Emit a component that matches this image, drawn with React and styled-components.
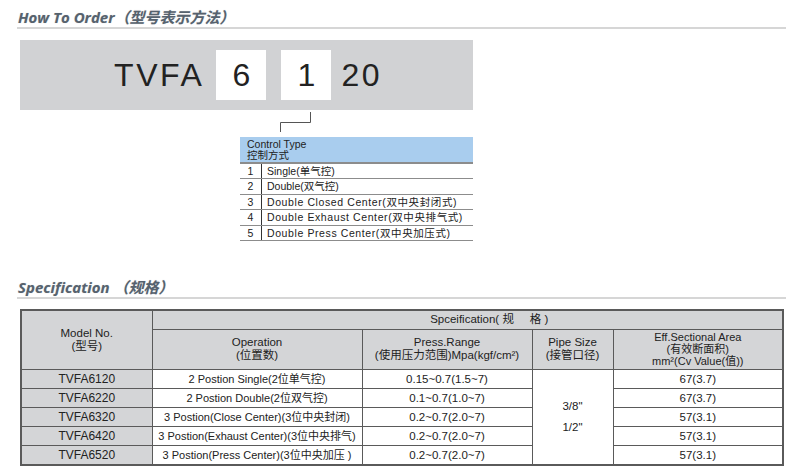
import React from "react";
import styled, { createGlobalStyle } from "styled-components";

const Global = createGlobalStyle`
  body {
    margin: 0;
    background: #ffffff;
    font-family: "Liberation Sans", Arial, "Noto Sans CJK SC", sans-serif;
    color: #222;
  }
`;

const controlTypes = [
  { no: 1, text: "Single(单气控)" },
  { no: 2, text: "Double(双气控)" },
  { no: 3, text: "Double Closed Center(双中央封闭式)", wide: true },
  { no: 4, text: "Double Exhaust Center(双中央排气式)", wide: true },
  { no: 5, text: "Double Press Center(双中央加压式)", wide: true },
];

const models = [
  { model: "TVFA6120", op: "2 Postion Single(2位单气控)", press: "0.15~0.7(1.5~7)", area: "67(3.7)" },
  { model: "TVFA6220", op: "2 Postion Double(2位双气控)", press: "0.1~0.7(1.0~7)", area: "67(3.7)" },
  { model: "TVFA6320", op: "3 Postion(Close Center)(3位中央封闭)", press: "0.2~0.7(2.0~7)", area: "57(3.1)" },
  { model: "TVFA6420", op: "3 Postion(Exhaust Center)(3位中央排气)", press: "0.2~0.7(2.0~7)", area: "57(3.1)" },
  { model: "TVFA6520", op: "3 Postion(Press Center)(3位中央加压 )", press: "0.2~0.7(2.0~7)", area: "57(3.1)" },
];

export default function App() {
  return (
    <Page>
      <Global />
      <Heading>How To Order（型号表示方法）</Heading>
      <Rule />
      <CodeBar>
        <CodeText>TVFA</CodeText>
        <CodeBox>6</CodeBox>
        <CodeBox>1</CodeBox>
        <CodeText $gap={10}>20</CodeText>
      </CodeBar>
      <Connector width="453" height="27" viewBox="0 0 453 27">
        <path d="M290.5 2 V12.5 H260.5 V22" fill="none" stroke="#555" strokeWidth="1" />
      </Connector>
      <ControlTable>
        <ControlHead>
          <div>Control Type</div>
          <div>控制方式</div>
        </ControlHead>
        {controlTypes.map((c) => (
          <ControlRow key={c.no}>
            <ControlNo>{c.no}</ControlNo>
            <ControlText $wide={c.wide}>{c.text}</ControlText>
          </ControlRow>
        ))}
      </ControlTable>

      <Heading $top={37}>Specification （规格）</Heading>
      <Rule />
      <SpecTable>
        <colgroup>
          <col style={{ width: 131 }} />
          <col style={{ width: 210 }} />
          <col style={{ width: 170 }} />
          <col style={{ width: 81 }} />
          <col style={{ width: 170 }} />
        </colgroup>
        <thead>
          <tr>
            <HeadCell rowSpan={2}>
              Model No.
              <br />
              (型号)
            </HeadCell>
            <HeadCell colSpan={4} $h={18} $shift={44}>
              Spceification(&nbsp;规&nbsp;&nbsp;&nbsp;&nbsp;&nbsp;格&nbsp;)
            </HeadCell>
          </tr>
          <tr>
            <HeadCell $h={39}>
              Operation
              <br />
              (位置数)
            </HeadCell>
            <HeadCell>
              Press.Range
              <br />
              (使用压力范围)Mpa(kgf/cm²)
            </HeadCell>
            <HeadCell>
              Pipe Size
              <br />
              (接管口径)
            </HeadCell>
            <HeadCell $tight>
              Eff.Sectional Area
              <br />
              (有效断面积)
              <br />
              mm²(Cv Value(值))
            </HeadCell>
          </tr>
        </thead>
        <tbody>
          {models.map((m, i) => (
            <tr key={m.model}>
              <ModelCell>{m.model}</ModelCell>
              <Cell $small>{m.op}</Cell>
              <Cell>{m.press}</Cell>
              {i === 0 && (
                <PipeCell rowSpan={5}>
                  <div>3/8"</div>
                  <div>1/2"</div>
                </PipeCell>
              )}
              <Cell>{m.area}</Cell>
            </tr>
          ))}
        </tbody>
      </SpecTable>
    </Page>
  );
}

const Page = styled.div`
  width: 800px;
  height: 469px;
  overflow: hidden;
  padding-left: 17px;
  box-sizing: border-box;
`;

const Heading = styled.h2`
  margin: ${(p) => p.$top || 8}px 0 0 1px;
  height: 18px;
  font-size: 15px;
  line-height: 18px;
  font-style: italic;
  font-weight: bold;
  color: #56626e;
  font-family: "Open Sans", "Liberation Sans", "Noto Sans CJK SC", sans-serif;
  text-shadow: 0 0 1px rgba(80, 90, 100, 0.3);
`;

const Rule = styled.div`
  width: 769px;
  height: 2px;
  margin-top: 1px;
  background: #d6d6d6;
`;

const CodeBar = styled.div`
  margin: 11px 0 0 3px;
  width: 453px;
  height: 70px;
  background: #d1d2d4;
  display: flex;
  align-items: center;
  padding-left: 94px;
  box-sizing: border-box;
  font-size: 32px;
  color: #222;
`;

const CodeText = styled.span`
  letter-spacing: 2.6px;
  margin-left: ${(p) => p.$gap || 0}px;
`;

const CodeBox = styled.span`
  width: 50px;
  height: 50px;
  margin-left: 12px;
  background: #ffffff;
  display: flex;
  align-items: center;
  justify-content: center;
  & + & {
    margin-left: 15px;
  }
`;

const Connector = styled.svg`
  display: block;
  margin-left: 3px;
`;

const ControlTable = styled.div`
  margin-left: 223px;
  width: 233px;
  font-size: 10.5px;
  color: #222;
`;

const ControlHead = styled.div`
  height: 27px;
  background: #a9cdee;
  padding: 2px 0 0 7px;
  box-sizing: border-box;
  line-height: 11px;
  border-bottom: 2px solid #8c8c8c;
`;

const ControlRow = styled.div`
  display: flex;
  height: 15.4px;
  border-bottom: 1px solid #8c8c8c;
  box-sizing: border-box;
  line-height: 14px;
`;

const ControlNo = styled.div`
  width: 22px;
  text-align: center;
  border-right: 1px solid #333;
  box-sizing: border-box;
`;

const ControlText = styled.div`
  padding-left: 5px;
  letter-spacing: ${(p) => (p.$wide ? "0.6px" : "0")};
  white-space: nowrap;
`;

const SpecTable = styled.table`
  margin: 10px 0 0 3px;
  width: 762px;
  table-layout: fixed;
  border-collapse: collapse;
  border: 2px solid #5a5a5a;
  font-size: 11.5px;
  color: #222;
`;

const HeadCell = styled.th`
  background: #d4d5d7;
  font-weight: normal;
  border: 1px solid #5a5a5a;
  height: ${(p) => (p.$h ? `${p.$h}px` : "auto")};
  padding: 0 0 0 ${(p) => p.$shift || 0}px;
  font-size: ${(p) => (p.$tight ? "11px" : "11.5px")};
  line-height: ${(p) => (p.$tight ? "12px" : "13px")};
  text-align: center;
  vertical-align: middle;
`;

const Cell = styled.td`
  height: 18px;
  padding: 0;
  text-align: center;
  border: 1px solid #5a5a5a;
  font-size: ${(p) => (p.$small ? "11px" : "11.5px")};
  line-height: 18px;
  white-space: nowrap;
  background: #ffffff;
`;

const ModelCell = styled(Cell)`
  background: #d4d5d7;
  font-size: 12px;
`;

const PipeCell = styled.td`
  padding: 0;
  text-align: center;
  vertical-align: middle;
  border: 1px solid #5a5a5a;
  line-height: 21px;
  background: #ffffff;
`;
